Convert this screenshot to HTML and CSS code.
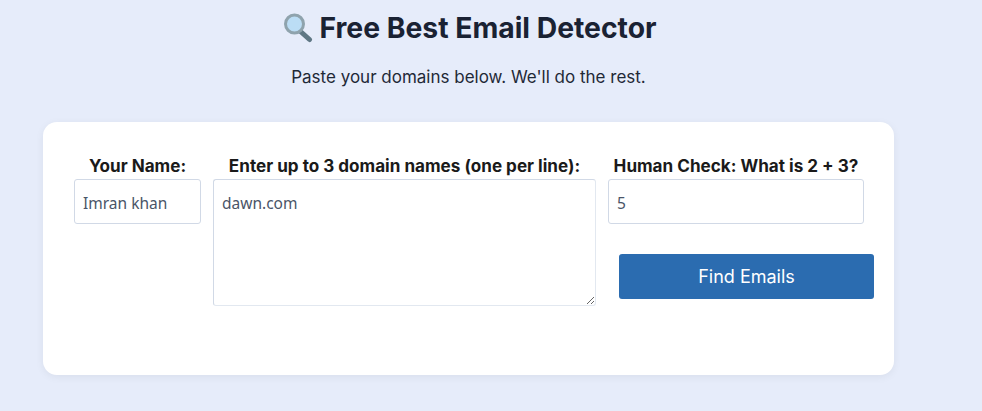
FILE: index.html
```html
<!DOCTYPE html>
<html lang="en">
<head>
    <meta charset="UTF-8">
    <meta name="viewport" content="width=device-width, initial-scale=1.0">
    <title>Free Best Email Detector</title>
    <link rel="stylesheet" href="styles.css">
</head>
<body>
    <div class="container">
        <h1>
            <svg class="lens" width="31" height="30" viewBox="0 0 31 30">
                <line x1="17" y1="18" x2="26.5" y2="26.5" stroke="#5f7784" stroke-width="5" stroke-linecap="round"/>
                <circle cx="11.5" cy="11" r="9" fill="#bbddf5" stroke="#8fa3ad" stroke-width="3"/>
            </svg>
            Free Best Email Detector
        </h1>
        <p class="intro">Paste your domains below. We'll do the rest.</p>
        <form class="card">
            <div class="field field-name">
                <label for="name">Your Name:</label>
                <input type="text" id="name" value="Imran khan">
            </div>
            <div class="field field-domains">
                <label for="domains">Enter up to 3 domain names (one per line):</label>
                <textarea id="domains">dawn.com</textarea>
            </div>
            <div class="field field-check">
                <label for="check">Human Check: What is 2 + 3?</label>
                <input type="text" id="check" value="5">
                <button type="button">Find Emails</button>
            </div>
        </form>
    </div>
</body>
</html>
```

FILE: styles.css
```css
html, body {
    height: 100%;
}
body {
    font-family: Inter, "Liberation Sans", sans-serif;
    background-color: #e6ecfa;
    color: #1f2937;
    margin: 0;
    overflow: hidden;
}
.container {
    width: 851px;
    margin-left: 43px;
}
h1 {
    display: flex;
    justify-content: center;
    align-items: center;
    gap: 5px;
    height: 30px;
    margin: 13px 0 0;
    padding-left: 3px;
    font-size: 28.3px;
    font-weight: 700;
    color: #1a2233;
}
.intro {
    margin: 22px 0 0;
    font-size: 17px;
    line-height: 24px;
    text-align: center;
}
.card {
    display: flex;
    gap: 12px;
    height: 253px;
    box-sizing: border-box;
    margin-top: 33px;
    padding: 33px 30px 0 31px;
    background-color: #ffffff;
    border-radius: 14px;
    box-shadow: 0 2px 8px rgba(0, 0, 0, 0.06);
}
.field {
    display: flex;
    flex-direction: column;
}
.field-name {
    width: 127px;
}
.field-domains {
    width: 383px;
}
.field-check {
    width: 256px;
}
label {
    display: block;
    margin-bottom: 3px;
    font-size: 17.1px;
    line-height: 21px;
    font-weight: 700;
    color: #1a1a1a;
    text-align: center;
    white-space: nowrap;
}
input, textarea {
    display: block;
    box-sizing: border-box;
    width: 100%;
    padding: 11px 8px 9px;
    border: 1px solid #d1d9e6;
    border-radius: 3px;
    background-color: #ffffff;
    font-family: "Noto Sans", "Open Sans", sans-serif;
    font-size: 15.5px;
    line-height: 24px;
    color: #4a5568;
}
input {
    height: 45px;
}
textarea {
    height: 127px;
    border-color: #d1d9e6 #e2e8f0 #e2e8f0 #d1d9e6;
}
button {
    box-sizing: border-box;
    width: 255px;
    height: 45px;
    margin: 30px 0 0 11px;
    flex-shrink: 0;
    border: none;
    border-radius: 3px;
    background-color: #2b6cb0;
    color: #ffffff;
    font-family: Inter, "Liberation Sans", sans-serif;
    font-size: 18px;
}
```
